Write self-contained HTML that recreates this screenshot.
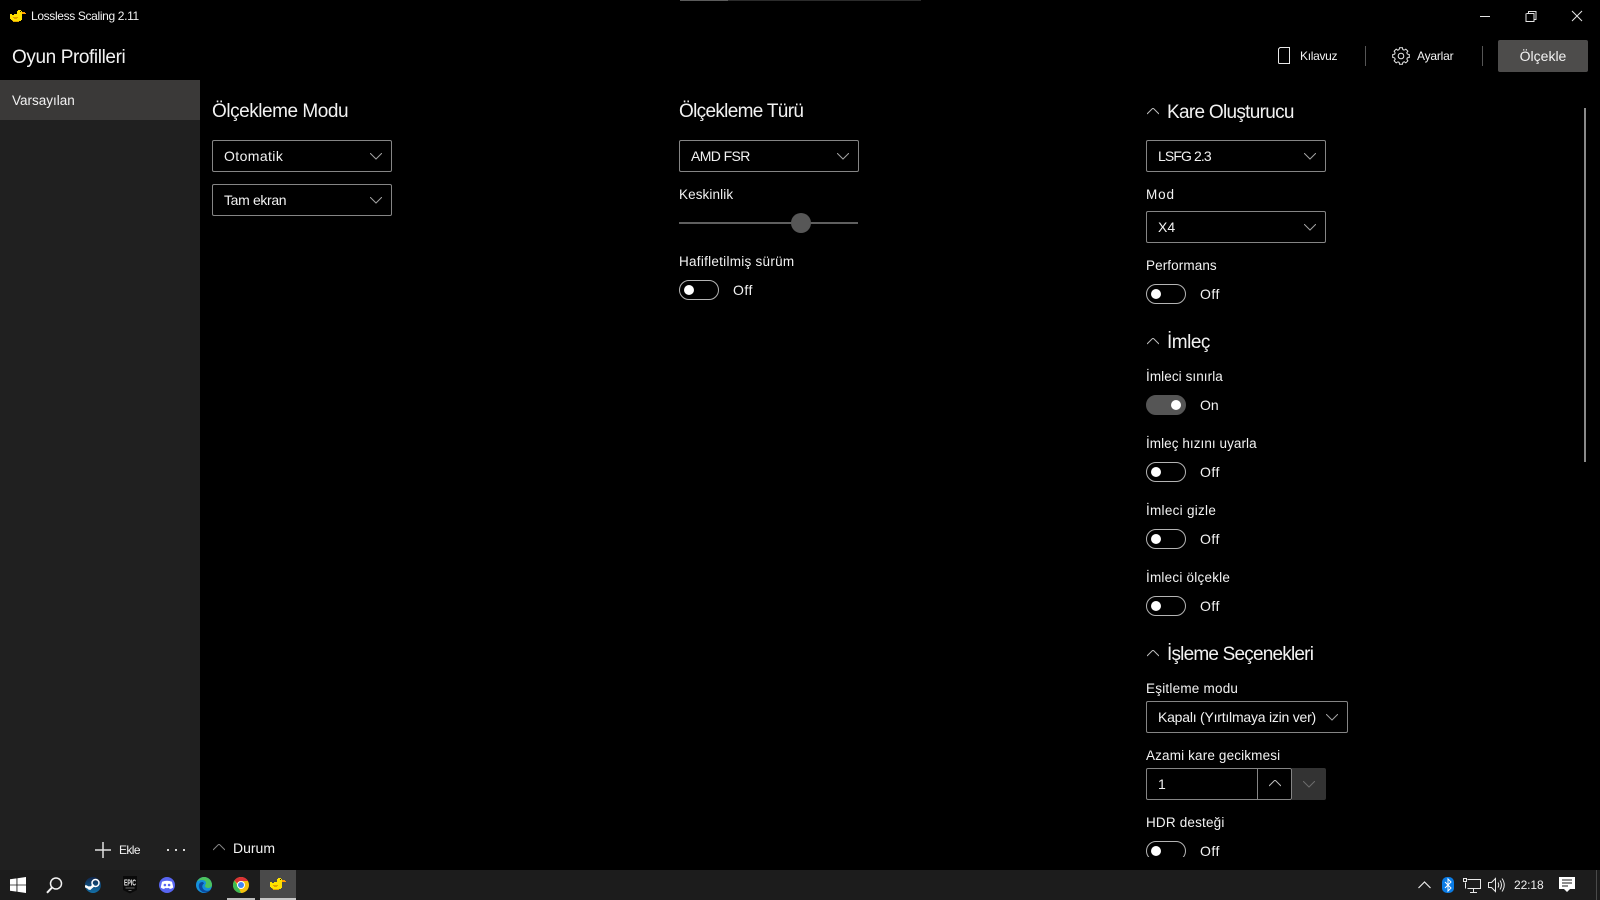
<!DOCTYPE html>
<html lang="tr"><head><meta charset="utf-8"><title>Lossless Scaling</title>
<style>
html,body{margin:0;padding:0;background:#000}
#r{position:relative;width:1600px;height:900px;overflow:hidden;background:#000;color:#f2f2f2;font-family:"Liberation Sans",sans-serif;font-size:14px}
#r>*{position:absolute}
.t{white-space:nowrap;line-height:20px;height:20px}
.h{font-size:19px;line-height:26px;height:26px;white-space:nowrap}
.l{font-size:13.5px}
.s{font-size:12px;letter-spacing:-.2px}
.o{letter-spacing:.5px}
.c{box-sizing:border-box;border:1px solid #858585;border-radius:2px;height:32px;width:180px;line-height:30px;padding-left:11px;font-size:14px;white-space:nowrap}
.tg{box-sizing:border-box;width:40px;height:20px;border:1px solid #b4b4b4;border-radius:10px}
.tg i{position:absolute;left:4px;top:4px;width:10px;height:10px;border-radius:50%;background:#fff}
svg{display:block}
</style></head><body><div id="r">
<svg width="0" height="0" style="position:absolute"><defs>
<g id="duck" shape-rendering="crispEdges">
<path fill="#ffe100" d="M8 0h3v1h1v9h-1v1H9v1H3v-1H2v-1H1V9H0V4h2v1h2V4h3V1h1z"/>
<path fill="#ff9a00" d="M12 2h3v1h1v1h-4z"/>
<path fill="#2a2000" d="M10 1h1v1h-1z"/>
<path fill="#e2a400" d="M3 7h5v1H7v1H4V8H3zM2 10h1v1h6v1H3v-1H2z"/>
</g>
<path id="chev" d="M0 0l6 6 6-6" fill="none" stroke="#a2a2a2" stroke-width="1"/>
<path id="up" d="M0 6l6-6 6 6" fill="none" stroke="#bdbdbd" stroke-width="1"/>
<path id="gt" d="M7.180 2.660L7.540 .73H10.460L10.820 2.660A6.600 6.600 0 0 1 12.200 3.230"/>
</defs></svg>

<!-- top line -->
<div style="left:680px;top:0;width:241px;height:1px;background:#2b2b2b"></div>
<div style="left:680px;top:0;width:48px;height:1px;background:#5c5c5c"></div>

<!-- title bar -->
<svg style="left:10px;top:10px" width="16" height="12" viewBox="0 0 16 12"><use href="#duck"/></svg>
<div class="t s" style="left:31px;top:6px;letter-spacing:-.35px">Lossless Scaling 2.11</div>
<svg style="left:1470px;top:6px" width="120" height="20" fill="none" stroke="#e4e4e4" stroke-width="1" shape-rendering="crispEdges"><path d="M10 10.500h10"/><path d="M56.500 7.500h7.500v8h-8v-8M58.500 7V5.500h7.500v8H64.500"/><path d="M102 5l10 10M112 5L102 15" shape-rendering="auto"/></svg>

<div class="t" style="left:12px;top:48px;font-size:19px;letter-spacing:-.4px">Oyun Profilleri</div>

<!-- sidebar -->
<div style="left:0;top:80px;width:200px;height:790px;background:#202020"></div>
<div style="left:0;top:80px;width:200px;height:40px;background:#3a3938"></div>
<div class="t l" style="left:12px;top:91px">Varsayılan</div>
<svg style="left:95px;top:842px" width="16" height="16"><path d="M0 8h16M8 0v16" stroke="#e0e0e0" stroke-width="1.500"/></svg>
<div class="t s" style="left:119px;top:840px;letter-spacing:-.6px">Ekle</div>
<svg style="left:167px;top:848px" width="18" height="4" fill="#d8d8d8"><rect x="0" y="1" width="2" height="2"/><rect x="8" y="1" width="2" height="2"/><rect x="16" y="1" width="2" height="2"/></svg>

<!-- top right -->
<svg style="left:1277px;top:47px" width="14" height="18"><path d="M3 .5h9.500v16H2.500a1 1 0 0 1-1-1V2z" fill="none" stroke="#e8e8e8" stroke-width="1"/></svg>
<div class="t s" style="left:1300px;top:46px;letter-spacing:-.3px">Kılavuz</div>
<div style="left:1365px;top:46px;width:1px;height:20px;background:#555"></div>
<svg style="left:1392px;top:47px" width="18" height="18" viewBox="0 0 18 18" fill="none" stroke="#e8e8e8" stroke-width="1"><circle cx="9" cy="9" r="2.800"/><use href="#gt"/><use href="#gt" transform="rotate(45 9 9)"/><use href="#gt" transform="rotate(90 9 9)"/><use href="#gt" transform="rotate(135 9 9)"/><use href="#gt" transform="rotate(180 9 9)"/><use href="#gt" transform="rotate(225 9 9)"/><use href="#gt" transform="rotate(270 9 9)"/><use href="#gt" transform="rotate(315 9 9)"/></svg>
<div class="t s" style="left:1417px;top:46px">Ayarlar</div>
<div style="left:1482px;top:46px;width:1px;height:20px;background:#555"></div>
<div class="t" style="left:1498px;top:40px;width:90px;height:32px;line-height:32px;background:#4d4c4b;border-radius:2px;text-align:center">Ölçekle</div>

<!-- col 1 -->
<div class="h" style="left:212px;top:99px;letter-spacing:-.46px">Ölçekleme Modu</div>
<div class="c" style="left:212px;top:140px;letter-spacing:.4px">Otomatik</div>
<svg style="left:370px;top:153px" width="12" height="7"><use href="#chev"/></svg>
<div class="c" style="left:212px;top:184px;letter-spacing:-.35px">Tam ekran</div>
<svg style="left:370px;top:197px" width="12" height="7"><use href="#chev"/></svg>

<svg style="left:213px;top:844px" width="12" height="7"><path d="M0 6l6-6 6 6" fill="none" stroke="#858585"/></svg>
<div class="t" style="left:233px;top:838px">Durum</div>

<!-- col 2 -->
<div class="h" style="left:679px;top:99px;letter-spacing:-.68px">Ölçekleme Türü</div>
<div class="c" style="left:679px;top:140px;letter-spacing:-.6px">AMD FSR</div>
<svg style="left:837px;top:153px" width="12" height="7"><use href="#chev"/></svg>
<div class="t l" style="left:679px;top:185px;letter-spacing:.1px">Keskinlik</div>
<div style="left:679px;top:222px;width:179px;height:2px;background:#5f5f5f"></div>
<div style="left:791px;top:213px;width:20px;height:20px;border-radius:50%;background:#575757"></div>
<div class="t l" style="left:679px;top:252px;letter-spacing:.27px">Hafifletilmiş sürüm</div>
<div class="tg" style="left:679px;top:280px"><i></i></div>
<div class="t o" style="left:733px;top:280px">Off</div>

<!-- col 3 -->
<svg style="left:1147px;top:108px" width="12" height="7"><use href="#up"/></svg>
<div class="h" style="left:1167px;top:100px;letter-spacing:-.7px">Kare Oluşturucu</div>
<div class="c" style="left:1146px;top:140px;letter-spacing:-.9px">LSFG 2.3</div>
<svg style="left:1304px;top:153px" width="12" height="7"><use href="#chev"/></svg>
<div class="t l" style="left:1146px;top:185px;letter-spacing:.9px">Mod</div>
<div class="c" style="left:1146px;top:211px">X4</div>
<svg style="left:1304px;top:224px" width="12" height="7"><use href="#chev"/></svg>
<div class="t l" style="left:1146px;top:256px;letter-spacing:.1px">Performans</div>
<div class="tg" style="left:1146px;top:284px"><i></i></div>
<div class="t o" style="left:1200px;top:284px">Off</div>

<svg style="left:1147px;top:338px" width="12" height="7"><use href="#up"/></svg>
<div class="h" style="left:1167px;top:330px;letter-spacing:-.5px">İmleç</div>
<div class="t l" style="left:1146px;top:367px;letter-spacing:.08px">İmleci sınırla</div>
<div class="tg" style="left:1146px;top:395px;background:#555;border-color:#555"><i style="left:24px"></i></div>
<div class="t" style="left:1200px;top:395px">On</div>
<div class="t l" style="left:1146px;top:434px;letter-spacing:.06px">İmleç hızını uyarla</div>
<div class="tg" style="left:1146px;top:462px"><i></i></div>
<div class="t o" style="left:1200px;top:462px">Off</div>
<div class="t l" style="left:1146px;top:501px;letter-spacing:.28px">İmleci gizle</div>
<div class="tg" style="left:1146px;top:529px"><i></i></div>
<div class="t o" style="left:1200px;top:529px">Off</div>
<div class="t l" style="left:1146px;top:568px;letter-spacing:.22px">İmleci ölçekle</div>
<div class="tg" style="left:1146px;top:596px"><i></i></div>
<div class="t o" style="left:1200px;top:596px">Off</div>

<svg style="left:1147px;top:650px" width="12" height="7"><use href="#up"/></svg>
<div class="h" style="left:1167px;top:642px;letter-spacing:-.8px">İşleme Seçenekleri</div>
<div class="t l" style="left:1146px;top:679px;letter-spacing:.22px">Eşitleme modu</div>
<div class="c" style="left:1146px;top:701px;width:202px;letter-spacing:-.22px">Kapalı (Yırtılmaya izin ver)</div>
<svg style="left:1326px;top:714px" width="12" height="7"><use href="#chev"/></svg>
<div class="t l" style="left:1146px;top:746px;letter-spacing:.15px">Azami kare gecikmesi</div>
<div class="c" style="left:1146px;top:768px;width:146px">1</div>
<div style="left:1257px;top:768px;width:1px;height:32px;background:#858585"></div>
<svg style="left:1269px;top:780px" width="12" height="7"><use href="#up"/></svg>
<div style="left:1292px;top:768px;width:34px;height:32px;background:#333;border-radius:0 2px 2px 0"></div>
<svg style="left:1303px;top:781px" width="12" height="7"><path d="M0 0l6 6 6-6" fill="none" stroke="#6c6c6c"/></svg>
<div class="t l" style="left:1146px;top:813px;letter-spacing:.18px">HDR desteği</div>
<div style="left:1146px;top:841px;width:40px;height:16px;overflow:hidden"><div class="tg" style="position:relative"><i></i></div></div>
<div class="t o" style="left:1200px;top:841px">Off</div>

<!-- scrollbar -->
<div style="left:1584px;top:108px;width:2px;height:354px;background:#8a8a8a"></div>

<!-- taskbar -->
<div style="left:0;top:870px;width:1600px;height:30px;background:#1c1c1c"></div>
<svg style="left:10px;top:877px" width="16" height="16" fill="#fff"><path d="M0 2.300l6.500-.9v6.200H0zM7.400 1.300L16 0v7.600H7.400zM0 8.400h6.500v6.200L0 13.700zM7.400 8.400H16V16l-8.600-1.300z"/></svg>
<svg style="left:46px;top:877px" width="17" height="17" fill="none" stroke="#f2f2f2" stroke-width="1.500"><circle cx="10" cy="6.500" r="5.500"/><path d="M6 10.500L1 15.800" stroke-width="2"/></svg>
<svg style="left:85px;top:877px" width="16" height="16"><defs><linearGradient id="sg" x1="0" y1="0" x2="0" y2="1"><stop offset="0" stop-color="#10254a"/><stop offset="1" stop-color="#1370a8"/></linearGradient></defs><circle cx="8" cy="8" r="8" fill="url(#sg)"/><path d="M0 9l5 2.500 4-3.500" stroke="#fff" stroke-width="2.500" fill="none"/><circle cx="10.500" cy="6" r="3.500" fill="none" stroke="#fff" stroke-width="1.500"/><circle cx="4.500" cy="11" r="1.800" fill="#fff"/></svg>
<svg style="left:123px;top:876px" width="14" height="18"><path d="M0 0h14v14l-7 3.500L0 14z" fill="#0a0a0a"/><text x="7" y="9.500" text-anchor="middle" font-family="Liberation Sans" font-size="8" font-weight="700" fill="#f4f4f4" textLength="12" lengthAdjust="spacingAndGlyphs">EPIC</text><path d="M2.500 12h9M5.500 14.500h3" stroke="#888" stroke-width=".8"/></svg>
<svg style="left:159px;top:877px" width="16" height="16"><circle cx="8" cy="8" r="8" fill="#5865f2"/><path d="M3 4.800q5-2 10 0l1.300 5.700q-1.700 1.400-3.500 1.500l-.8-1.100q-2 .5-4 0l-.8 1.100q-1.800-.1-3.500-1.500z" fill="#fff"/><circle cx="5.900" cy="8" r="1.300" fill="#5865f2"/><circle cx="10.100" cy="8" r="1.300" fill="#5865f2"/></svg>
<svg style="left:196px;top:877px" width="16" height="16"><circle cx="8" cy="8" r="8" fill="#1590dc"/><path d="M1 4.500C3 1 6 0 8 0c5 0 8 4 8 8 0 2-2 3-4 3-1.500 0-3-.8-3-2 0-1.500 1-1.500 1-3C10 4 8 3 6 3 4 3 2 3.500 1 4.500z" fill="#4cc35e"/><path d="M6.500 5C4 5 2.500 7 2.800 9.500 3.200 13 6 15.500 9 15.500c2 0 4-.8 5.500-2.500-2 1-5 1.200-6.800-.5C6 11 5.500 8 8 6.500 7.700 5.700 7 5 6.500 5z" fill="#0a4aa0"/></svg>
<svg style="left:233px;top:877px" width="16" height="16"><circle cx="8" cy="8" r="8" fill="#f4c20d"/><path d="M8 0a8 8 0 0 1 7 4H8a4 4 0 0 0-3.700 2.400L1.400 3.500A8 8 0 0 1 8 0z" fill="#db3236"/><path d="M1.400 3.500L5 9.500 8 16A8 8 0 0 1 1.400 3.500z" fill="#3cba54"/><circle cx="8" cy="8" r="4" fill="#fff"/><circle cx="8" cy="8" r="3" fill="#4285f4"/></svg>
<div style="left:227px;top:898px;width:28px;height:2px;background:#bdbdbd"></div>
<div style="left:260px;top:870px;width:36px;height:30px;background:#4a4a4a"></div>
<div style="left:260px;top:898px;width:36px;height:2px;background:#c8c8c8"></div>
<svg style="left:270px;top:878px" width="16" height="12" viewBox="0 0 16 12"><use href="#duck"/></svg>

<svg style="left:1418px;top:881px" width="13" height="8" fill="none" stroke="#e8e8e8" stroke-width="1.200"><path d="M.5 7l6-6 6 6"/></svg>
<svg style="left:1442px;top:877px" width="12" height="16"><rect width="12" height="16" rx="5" fill="#0a7be4"/><path d="M3 5l6 6-3 3V2l3 3-6 6" fill="none" stroke="#fff"/></svg>
<svg style="left:1463px;top:878px" width="18" height="15" fill="none" stroke="#e8e8e8" stroke-width="1" shape-rendering="crispEdges"><path d="M4.500 1.500H17.500V10.500H4.500M10.500 11v3M7 14.500h7M2.500 4.500V10.500"/><rect x=".5" y=".5" width="3" height="3"/></svg>
<svg style="left:1488px;top:877px" width="17" height="16" fill="none" stroke="#e8e8e8"><path d="M.5 5.500h3l4-4v13l-4-4h-3z"/><path d="M10 5.500q1.500 2.500 0 5M12 3.500q3 4.500 0 9M14 1.500q4.500 6.500 0 13"/></svg>
<div class="t s" style="left:1514px;top:875px;color:#eee;letter-spacing:-.1px">22:18</div>
<svg style="left:1559px;top:877px" width="16" height="16"><path d="M0 0h16v12h-5l-3 3-3-3H0z" fill="#fff"/><path d="M3 3h10M3 6h10M3 9h6" stroke="#1c1c1c"/></svg>
<div style="left:1596px;top:870px;width:1px;height:30px;background:#4a4a4a"></div>
</div></body></html>
